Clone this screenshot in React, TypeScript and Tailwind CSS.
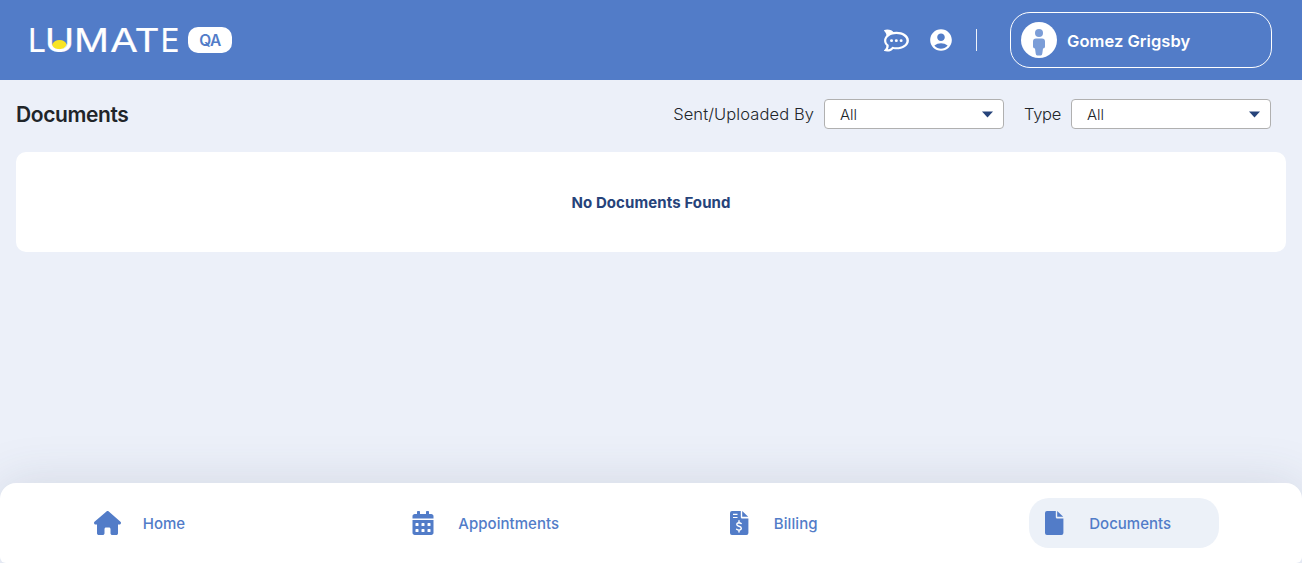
import type { ReactNode } from 'react';
import { FaCalendarAlt, FaRocketchat } from 'react-icons/fa';
import { FaHouse } from 'react-icons/fa6';
import { MdAccountCircle } from 'react-icons/md';

const logoLetters = [
  { char: 'L', x: 28, width: 18 },
  { char: 'U', x: 44.5, width: 30 },
  { char: 'M', x: 74, width: 35 },
  { char: 'A', x: 110, width: 28 },
  { char: 'T', x: 134.5, width: 25 },
  { char: 'E', x: 160.5, width: 19 },
];

function Logo() {
  return (
    <svg width="156" height="48" viewBox="26 16 156 48" className="block overflow-visible" aria-label="LUMATE">
      <path d="M52 45q2-5 7.500-5t7.500 5q-2 4.500-7.500 4.500t-7.500-4.500z" fill="#f8e424" />
      {logoLetters.map((l) => (
        <text
          key={l.char}
          x={l.x}
          y="52"
          textLength={l.width}
          lengthAdjust="spacingAndGlyphs"
          fill="#fff"
          stroke="#fff"
          strokeWidth="0.2"
          fontSize="33"
          fontFamily="Inter, sans-serif"
        >
          {l.char}
        </text>
      ))}
    </svg>
  );
}

function Avatar() {
  return (
    <svg width="36" height="36" viewBox="0 0 36 36" className="shrink-0">
      <circle cx="18" cy="18" r="18" fill="#fff" />
      <circle cx="18" cy="11" r="4" fill="#7b9dd7" />
      <path
        d="M15 16.500h6q3 0 3 3v5q0 1.800-2 2l-.7 5q-.2 2-1.500 2h-3.600q-1.300 0-1.500-2l-.7-5q-2-.2-2-2v-5q0-3 3-3z"
        fill="#7b9dd7"
      />
    </svg>
  );
}

function FileIcon({ children }: { children?: ReactNode }) {
  return (
    <svg width="18" height="24" viewBox="0 0 18 24" className="overflow-visible">
      <path d="M2 0h8.800v6.200q0 1.300 1.300 1.300h6.300V22q0 2-2 2H2q-2 0-2-2V2q0-2 2-2z" fill="#527cc8" />
      <path d="M12.200 0L18.200 5.800h-6z" fill="#527cc8" />
      {children}
    </svg>
  );
}

function InvoiceIcon() {
  return (
    <FileIcon>
      <path d="M3 3.400h4.500M3 6.500h4.500" stroke="#fff" strokeWidth="1.200" />
      <path
        d="M9 9.800v1.700M9 19.300V21M11.200 12.600q-1-.8-2.300-.8-2.100.1-2.100 1.700 0 1.200 2.200 1.800 2.300.6 2.300 2 0 1.700-2.200 1.800-1.400 0-2.500-.9"
        fill="none"
        stroke="#fff"
        strokeWidth="1.400"
        strokeLinecap="round"
      />
    </FileIcon>
  );
}

function Select({ label, className, labelClass }: { label: string; className: string; labelClass: string }) {
  return (
    <div className="flex items-center gap-[10px]">
      <span className={`whitespace-nowrap pt-px text-[16.500px] font-light leading-[29px] text-[#212529] ${labelClass}`}>{label}</span>
      <div
        className={`flex h-[30px] items-center justify-between rounded-[4px] border border-[#b0b0b0] bg-white pl-[15px] pr-[10px] ${className}`}
      >
        <span className="pt-[2px] text-[15px] font-light text-[#212529]">All</span>
        <svg width="11" height="7" viewBox="0 0 11 7">
          <path d="M0 .5h11L5.500 6.500z" fill="#26437a" />
        </svg>
      </div>
    </div>
  );
}

function NavItem({ icon, label, active, labelClass }: { icon: ReactNode; label: string; active?: boolean; labelClass: string }) {
  return (
    <a className={`flex h-[50px] w-[190px] items-center rounded-[20px] ${active ? 'bg-[#ecf1f8]' : ''}`}>
      <span className="flex w-[50px] justify-center">{icon}</span>
      <span className={`ml-[10px] whitespace-nowrap pt-[2px] text-[15px] font-medium ${labelClass}`}>{label}</span>
    </a>
  );
}

export default function App() {
  return (
    <div className="flex h-[563px] w-full flex-col overflow-hidden bg-[#ecf0f9] font-[Inter,sans-serif] text-[#212529]">
      <header className="flex h-20 shrink-0 items-center justify-between bg-[#527cc8] pl-[26px] pr-[30px]">
        <div className="flex items-center gap-[6px]">
          <Logo />
          <span className="flex h-[26px] w-11 items-center justify-center rounded-[10px] bg-white pt-[2px] text-[15.500px] font-semibold tracking-[-0.6px] text-[#527cc8]">
            QA
          </span>
        </div>
        <div className="flex items-center text-white">
          <FaRocketchat className="h-[23px] w-[25px]" />
          <MdAccountCircle className="ml-[19px] size-[26px]" />
          <div className="ml-[22px] h-[22px] w-px bg-white/90" />
          <div className="ml-[33px] flex h-14 w-[262px] items-center gap-[10px] rounded-[20px] border border-white pl-[10px]">
            <Avatar />
            <span className="mt-[2px] whitespace-nowrap text-[16.500px] font-semibold tracking-[0.040px]">Gomez Grigsby</span>
          </div>
        </div>
      </header>

      <main className="flex grow flex-col px-4">
        <div className="flex h-[72px] items-center justify-between pb-[4px] pr-[15px]">
          <h1 className="pt-px text-[21px] font-semibold tracking-[-0.400px]">Documents</h1>
          <div className="flex gap-5">
            <Select label="Sent/Uploaded By" className="w-[180px]" labelClass="tracking-[0.100px]" />
            <Select label="Type" className="w-[200px]" labelClass="w-[37px] tracking-[-0.300px]" />
          </div>
        </div>
        <section className="flex h-[100px] items-center justify-center rounded-[10px] bg-white">
          <p className="pt-[2px] text-[15px] font-bold tracking-[0.100px] text-[#26437a]">No Documents Found</p>
        </section>
      </main>

      <nav className="flex h-20 shrink-0 items-center justify-around rounded-b-[6px] rounded-t-[16px] bg-white px-5 text-[#527cc8] shadow-[0_0_50px_rgba(60,75,100,0.15)]">
        <NavItem icon={<FaHouse className="h-[24px] w-[27px]" />} label="Home" labelClass="tracking-[0px]" />
        <NavItem icon={<FaCalendarAlt className="size-[24px]" />} label="Appointments" labelClass="tracking-[0.050px]" />
        <NavItem icon={<InvoiceIcon />} label="Billing" labelClass="tracking-[0.100px]" />
        <NavItem icon={<FileIcon />} label="Documents" active labelClass="tracking-[0px]" />
      </nav>
    </div>
  );
}
